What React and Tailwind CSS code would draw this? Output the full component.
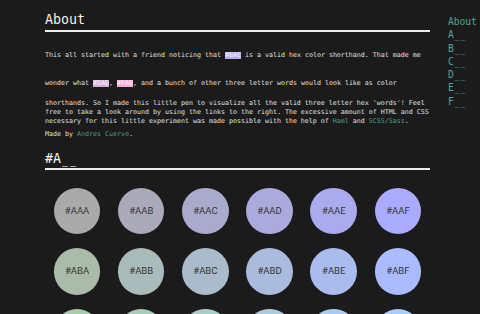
const rows = ['A', 'B', 'C'];
const hexDigits = ['A', 'B', 'C', 'D', 'E', 'F'];

const navItems = ['About', 'A', 'B', 'C', 'D', 'E', 'F'];

// underscores with a little gap between them, like the reference font
function Blanks() {
  return (
    <>
      <span className="inline-block scale-x-[0.75]">_</span>
      <span className="inline-block scale-x-[0.75]">_</span>
    </>
  );
}

function Swatch({ code }) {
  return (
    <span
      className="mt-[8.2px] mb-[12.5px] inline-block align-baseline leading-[7px] text-[#f4f4f4]"
      style={{ background: code }}
    >
      {code}
    </span>
  );
}

function Circle({ code }) {
  return (
    <div className="flex justify-center">
      <div
        className="flex h-[46.5px] w-[46.5px] items-center justify-center rounded-full font-['Roboto',sans-serif] text-[9.5px] text-[#363636]"
        style={{ background: code }}
      >
        {code}
      </div>
    </div>
  );
}

export default function App() {
  return (
    <div className="min-h-[314px] bg-[#1b1b1b] font-['DejaVu_Sans_Mono',monospace] text-[#e0e0e0] antialiased">
      <div className="flex pl-[45px]">
        <main className="w-[385px] shrink-0">
          {/* About */}
          <h2 className="mt-[11px] border-b-2 border-[#ececec] pb-[2px] text-[13.3px] leading-[17px] font-medium text-[#f2f2f2]">
            About
          </h2>
          <p className="mt-[12px] text-[6.65px] leading-[8.7px]">
            This all started with a friend noticing that <Swatch code="#BAE" /> is a valid hex color shorthand. That made me
            wonder what <Swatch code="#DAD" />, <Swatch code="#FAD" />, and a bunch of other three letter words would look like as color
            shorthands. So I made this little pen to visualize all the valid three letter hex 'words'! Feel free to take a look
            around by using the links to the right. The excessive amount of HTML and CSS necessary for this little experiment
            was made possible with the help of <a className="text-[#4c9e8e]">Haml</a> and{' '}
            <a className="text-[#4c9e8e]">SCSS/Sass</a>.
          </p>
          <p className="mt-[5px] text-[6.65px] leading-[8.7px]">
            Made by <a className="text-[#4c9e8e]">Andres Cuervo</a>.
          </p>

          {/* #A__ */}
          <h2 className="mt-[11px] border-b-2 border-[#ececec] pb-[1px] text-[13.3px] leading-[17px] font-medium text-[#f2f2f2]">
            #A<Blanks />
          </h2>
          <div className="grid grid-cols-6 gap-y-[14px] pt-[17.5px]">
            {rows.map((r) =>
              hexDigits.map((d) => <Circle key={r + d} code={`#A${r}${d}`} />)
            )}
          </div>
        </main>

        {/* Sidebar nav */}
        <nav className="ml-[18px] mt-[15px] flex flex-col text-[9.6px] leading-[13.3px] text-[#55a398]">
          {navItems.map((item) => (
            <a key={item}>
              {item}
              {item.length === 1 && <Blanks />}
            </a>
          ))}
        </nav>
      </div>
    </div>
  );
}
